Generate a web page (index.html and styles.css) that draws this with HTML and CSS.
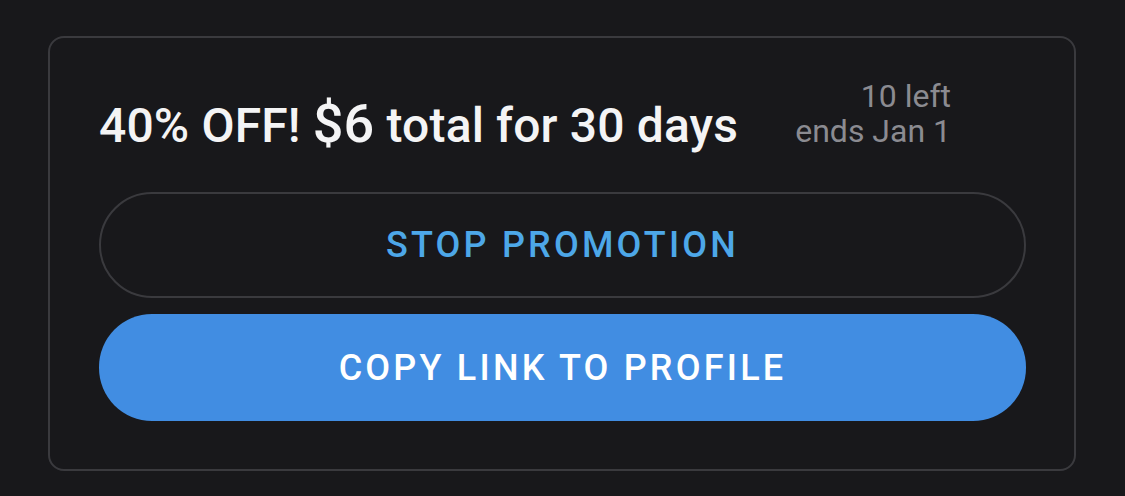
FILE: index.html
```html
<!DOCTYPE html>
<html lang="en">
<head>
  <meta charset="UTF-8" />
  <meta name="viewport" content="width=device-width, initial-scale=1.0"/>
  <title>Promotion</title>
  <link rel="stylesheet" href="styles.css">
</head>
<body>

  <div class="promo-card">
    <div class="promo-head">
      <h2 class="promo-title">40% OFF! <span class="price">$6</span> total for 30 days</h2>
      <div class="promo-meta">
        <div>10 left</div>
        <div>ends Jan 1</div>
      </div>
    </div>

    <button class="btn btn-outline">STOP PROMOTION</button>
    <button class="btn btn-primary">COPY LINK TO PROFILE</button>
  </div>

</body>
</html>
```

FILE: styles.css
```css
* { box-sizing: border-box; margin: 0; padding: 0; }

body {
  font-family: Roboto, 'Liberation Sans', sans-serif;
  background-color: #18181b;
  color: #f4f4f5;
  padding: 36px 49px 0 48px;
}

.promo-card {
  border: 2px solid #3a3a3e;
  border-radius: 16px;
  padding: 0 48px 48px 49px;
  display: flex;
  flex-direction: column;
  gap: 16px;
}

/* title row: meta text sits on the title's baseline, at the bottom */
.promo-head {
  display: flex;
  justify-content: space-between;
  align-items: last baseline;
  height: 154px;
  padding: 0 75px 38px 0;
}

.promo-title {
  font-size: 48px;
  font-weight: 500;
  line-height: 56px;
  letter-spacing: 0.15px;
}

.promo-title .price {
  font-size: 54px;
  line-height: 1;
}

.promo-meta {
  font-size: 32px;
  line-height: 35px;
  color: #8b8b91;
  text-align: right;
}

.btn {
  font-family: inherit;
  font-size: 36px;
  font-weight: 500;
  letter-spacing: 3.2px;
  height: 106px;
  border-radius: 53px;
  cursor: pointer;
}

.btn-outline {
  background: transparent;
  border: 2px solid #3a3a3e;
  color: #4da7e8;
  margin-top: -16px;
}

.btn-primary {
  background-color: #418de2;
  border: none;
  color: #ffffff;
  height: 107px;
}
```
